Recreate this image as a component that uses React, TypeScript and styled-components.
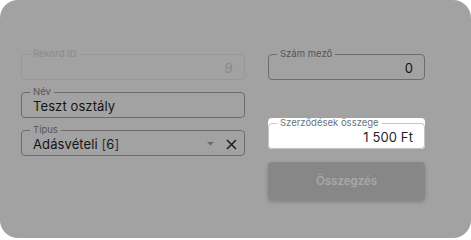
import React from 'react';
import styled, { createGlobalStyle } from 'styled-components';

const GlobalStyle = createGlobalStyle`
  html, body {
    margin: 0;
    padding: 0;
    background: #ffffff;
  }
  body {
    font-family: 'Inter', 'Noto Sans', sans-serif;
  }
`;

type Tone = 'disabled' | 'normal' | 'light';

const Card = styled.div`
  width: 471px;
  height: 238px;
  box-sizing: border-box;
  background: #a2a2a2;
  border-radius: 18px;
  padding: 49px 46px 0 21px;
  display: grid;
  grid-template-columns: 224px 157px;
  column-gap: 23px;
  align-items: start;
`;

const Column = styled.div`
  display: flex;
  flex-direction: column;
  gap: 7px;
`;

const RightColumn = styled.div`
  display: flex;
  flex-direction: column;
`;

const Field = styled.fieldset<{ $tone: Tone }>`
  margin: 0;
  padding: 0 11px 2px 11px;
  min-width: 0;
  border-radius: 4px;
  border: 1px solid
    ${(p) => (p.$tone === 'disabled' ? '#979797' : p.$tone === 'light' ? '#c4c4c4' : '#6c6c6c')};
  display: flex;
  align-items: center;
`;

const Legend = styled.legend<{ $tone: Tone }>`
  margin-left: -3px;
  padding: 0 3px;
  font-size: 9.5px;
  line-height: 10px;
  color: ${(p) => (p.$tone === 'disabled' ? '#8b8b8b' : p.$tone === 'light' ? '#6b7480' : '#555555')};
`;

const Value = styled.div<{ $tone: Tone; $right?: boolean }>`
  flex: 1;
  height: 18px;
  line-height: 18px;
  font-size: 13px;
  letter-spacing: 0.1px;
  text-align: ${(p) => (p.$right ? 'right' : 'left')};
  color: ${(p) => (p.$tone === 'disabled' ? '#898989' : p.$tone === 'light' ? '#1f1f1f' : '#141414')};
  white-space: nowrap;
`;

const Bracket = styled.span`
  color: #3a3040;
`;

const Adornments = styled.div`
  display: flex;
  align-items: center;
  gap: 12px;
  margin-right: -4px;
`;

const Highlight = styled.div`
  margin-top: 38px;
  background: #ffffff;
  border-radius: 4px;
`;

const SumButton = styled.button`
  margin-top: 13px;
  height: 38px;
  width: 100%;
  border: none;
  border-radius: 4px;
  background: #878787;
  box-shadow: 0 2px 4px rgba(0, 0, 0, 0.2);
  color: #a8a8a8;
  font-family: 'Inter', 'Noto Sans', sans-serif;
  font-weight: 600;
  font-size: 11.5px;
  cursor: default;
`;

const TextField: React.FC<{
  label: string;
  tone?: Tone;
  right?: boolean;
  children: React.ReactNode;
  end?: React.ReactNode;
}> = ({ label, tone = 'normal', right, children, end }) => (
  <Field $tone={tone}>
    <Legend $tone={tone}>{label}</Legend>
    <Value $tone={tone} $right={right}>
      {children}
    </Value>
    {end}
  </Field>
);

const App: React.FC = () => {
  return (
    <>
      <GlobalStyle />
      <Card>
        <Column>
          <TextField label="Rekord ID" tone="disabled" right>
            9
          </TextField>
          <TextField label="Név">Teszt osztály</TextField>
          <TextField
            label="Típus"
            end={
              <Adornments>
                <svg width="7" height="4" viewBox="0 0 7 4">
                  <path d="M0 0h7L3.5 3.5z" fill="#6a6a6a" />
                </svg>
                <svg width="11" height="11" viewBox="0 0 11 11">
                  <path d="M1 1l9 9M10 1L1 10" stroke="#1e1e1e" strokeWidth="1.5" />
                </svg>
              </Adornments>
            }
          >
            Adásvételi <Bracket>[</Bracket>6<Bracket>]</Bracket>
          </TextField>
        </Column>
        <RightColumn>
          <TextField label="Szám mező" right>
            0
          </TextField>
          <Highlight>
            <TextField label="Szerződések összege" tone="light" right>
              1 500 Ft
            </TextField>
          </Highlight>
          <SumButton>Összegzés</SumButton>
        </RightColumn>
      </Card>
    </>
  );
};

export default App;
